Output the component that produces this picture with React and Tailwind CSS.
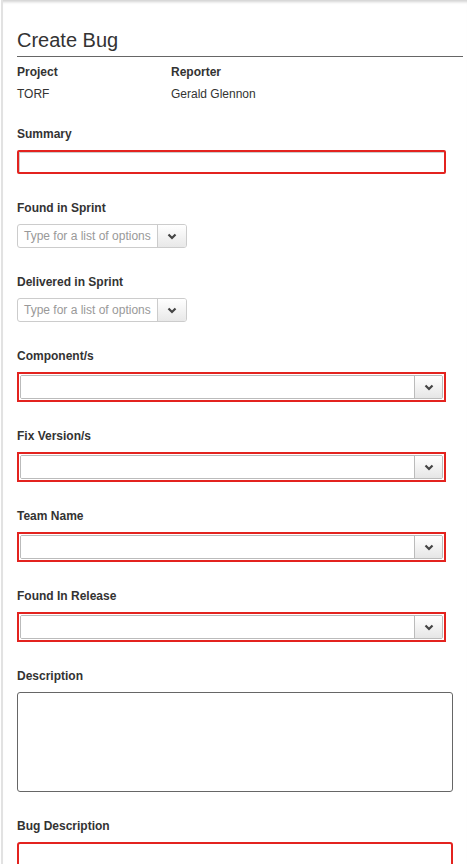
import React from "react";

const Chevron = () => (
  <svg width="10" height="7" viewBox="0 0 10 7">
    <polyline points="1.5,1.5 5,5 8.5,1.5" fill="none" stroke="#444" strokeWidth="2.2" />
  </svg>
);

const Label = ({ children }) => (
  <div className="text-[12px] leading-[16px] font-bold text-[#333] h-4">{children}</div>
);

const SmallSelect = () => (
  <div className="mt-[8px] flex w-[170px] h-[24px] border border-[#ccc] rounded-[3px] overflow-hidden">
    <div className="flex-1 flex items-center pl-[6px] text-[12px] text-[#999] whitespace-nowrap overflow-hidden">
      Type for a list of options
    </div>
    <div className="w-[29px] border-l border-[#ccc] bg-gradient-to-b from-[#fff] to-[#e8e8e8] flex items-center justify-center">
      <Chevron />
    </div>
  </div>
);

const RedSelect = () => (
  <div className="mt-[8px] w-[429px] h-[30px] border-2 border-[#e3231f] p-px">
    <div className="flex h-full border border-[#bbb] rounded-[2px] overflow-hidden">
      <div className="flex-1 bg-white" />
      <div className="w-[28px] border-l border-[#bbb] bg-gradient-to-b from-[#fff] to-[#e6e6e6] flex items-center justify-center">
        <Chevron />
      </div>
    </div>
  </div>
);

export default function App() {
  return (
    <div
      className="min-h-[864px] bg-white ml-px border-l-2 border-[#e2e2e2] shadow-[inset_0_4px_3px_-2px_rgba(0,0,0,0.18)] pl-[14px] pr-[4px] overflow-hidden"
      style={{ fontFamily: '"Liberation Sans", Arial, sans-serif' }}
    >
      <div className="pt-[28px] text-[20px] leading-[24px] text-[#333]">Create Bug</div>
      <div className="mt-[4px] h-px bg-[#666]" />
      <div className="mt-[7px] flex">
        <div className="w-[154px]">
          <Label>Project</Label>
          <div className="mt-[6px] text-[12px] leading-[16px] text-[#333]">TORF</div>
        </div>
        <div>
          <Label>Reporter</Label>
          <div className="mt-[6px] text-[12px] leading-[16px] text-[#333]">Gerald Glennon</div>
        </div>
      </div>

      <div className="mt-[24px]">
        <Label>Summary</Label>
        <div className="mt-[8px] w-[429px] h-[24px] border-2 border-[#e3231f] rounded-[2px]">
          <div className="h-full border-t border-l border-[#ccc]" />
        </div>
      </div>

      <div className="mt-[26px]">
        <Label>Found in Sprint</Label>
        <SmallSelect />
      </div>

      <div className="mt-[26px]">
        <Label>Delivered in Sprint</Label>
        <SmallSelect />
      </div>

      {["Component/s", "Fix Version/s", "Team Name", "Found In Release"].map((l) => (
        <div key={l} className="mt-[26px]">
          <Label>{l}</Label>
          <RedSelect />
        </div>
      ))}

      <div className="mt-[26px]">
        <Label>Description</Label>
        <div className="mt-[8px] w-[436px] h-[100px] border border-[#666] rounded-[3px]" />
      </div>

      <div className="mt-[26px]">
        <Label>Bug Description</Label>
        <div className="mt-[8px] w-[436px] h-[60px] border-2 border-[#e3231f] rounded-[3px]" />
      </div>
    </div>
  );
}
